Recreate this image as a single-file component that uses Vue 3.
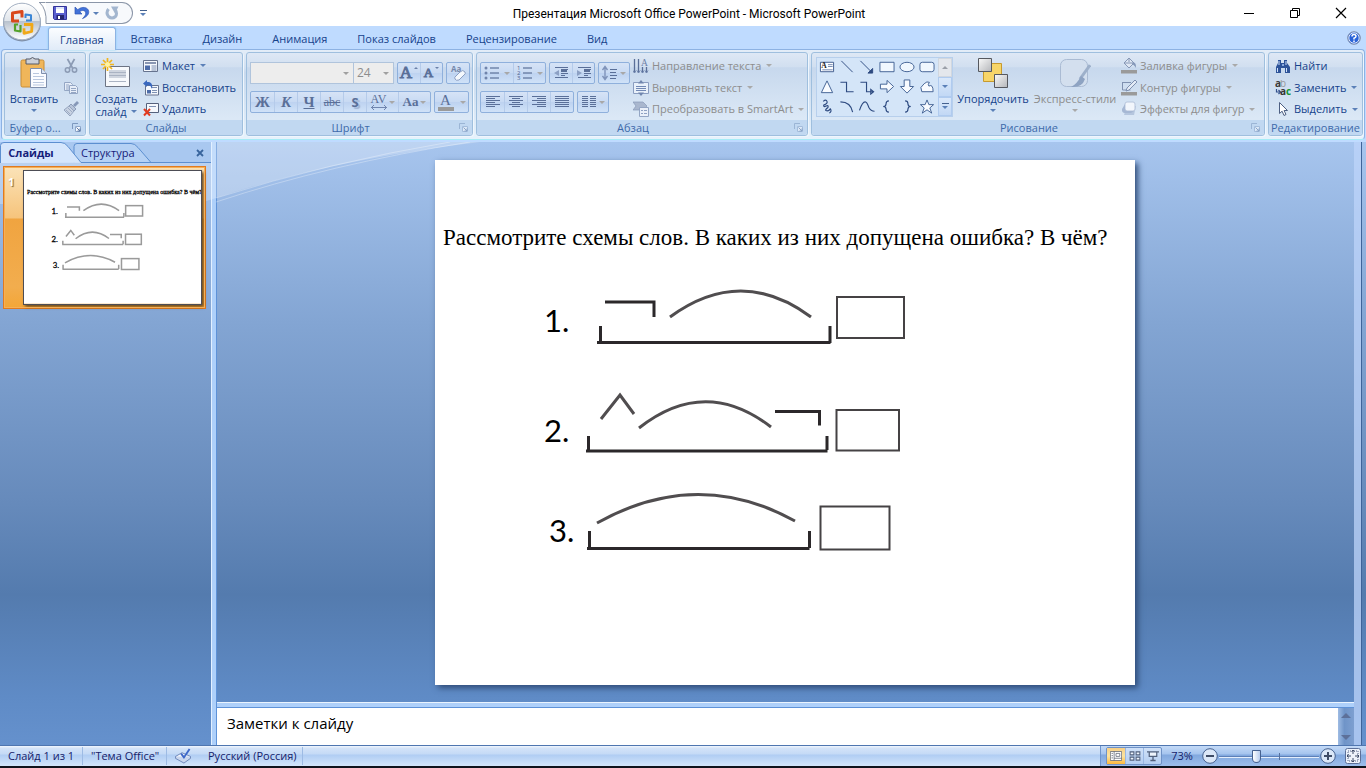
<script setup>
import { ref } from 'vue'

const tabs = ['Главная', 'Вставка', 'Дизайн', 'Анимация', 'Показ слайдов', 'Рецензирование', 'Вид']
const zoom = ref(36)
const dark = '#5a6f98'

const lines = (rows) => rows.map(([x1, x2, y]) => `<path d="M${x1} ${y}.5H${x2}" stroke="${dark}" stroke-width="1"/>`).join('')
const six = [2, 4, 6, 8, 10, 12]

const ic = {
  save: '<path d="M1.5 1.5h13v13h-12l-1-1z" fill="#5a5fd0" stroke="#34349a"/><path d="M4 2h8v6H4z" fill="#fff"/><path d="M4 2h8v2H4z" fill="#dfe6fa"/><path d="M4.500 10h7.500v4.500h-7.500z" fill="#25256e"/><path d="M6 11h2v3H6z" fill="#fff"/>',
  undo: '<path d="M1 2v7h7L5.800 6.800C8 4.600 11.500 5.200 11.800 8c.1 2-1.400 3.700-3.300 5.600C12.500 12 15 9.500 14.700 6.500 14.300 2.200 8 .8 3.800 4.700z" fill="#4272d8" stroke="#2c55b4" stroke-width=".7"/>',
  redo: '<path d="M4.500 4Q1.500 8 4.500 11.500Q8 14.500 11.500 11.500Q13.500 8.500 11.500 5" fill="none" stroke="#a3b6cf" stroke-width="3"/><path d="M7 1.500h7.500L11 8.500z" fill="#a3b6cf"/>',
  cut: '<path d="M4.500 1l5 9M11.500 1l-5 9" stroke="#8c9bb4" stroke-width="1.700"/><circle cx="4.500" cy="12" r="2.200" fill="none" stroke="#8c9bb4" stroke-width="1.500"/><circle cx="11.500" cy="12" r="2.200" fill="none" stroke="#8c9bb4" stroke-width="1.500"/>',
  copy: '<path d="M1.500 2.500h6l2 2v6h-8z" fill="#e6edf8" stroke="#94a6c4"/><path d="M3 5h3M3 7h3M3 9h3" stroke="#94a6c4"/><path d="M6.500 5.500h6l2 2v6h-8z" fill="#e6edf8" stroke="#94a6c4"/><path d="M8 8.500h5M8 10.500h5M8 12.500h5" stroke="#94a6c4"/>',
  brush: '<path d="M15 1l-4 4" stroke="#8698b8" stroke-width="2.800"/><path d="M8 3l5 5-2 2-5-5z" fill="#b6c3d8" stroke="#8c9cb8"/><path d="M6 5l5 5-4 5-6-6z" fill="#c8d2e2" stroke="#94a4be"/><path d="M3 9l4 4M5 7l4 4" stroke="#92a2bd" stroke-width=".8"/>',
  layout: '<path d="M.5 2.500h14v11H.5z" fill="#f5f8fd" stroke="#66738e"/><path d="M2 4h11v2H2z" fill="#8996b2"/><path d="M2 7.500h5v4.500H2z" fill="#4d6ca8"/><path d="M8.500 8h5M8.500 10h5M8.500 12h5" stroke="#7e91b4"/>',
  reset: '<path d="M2.500 5.500h13v9.500h-13z" fill="#f5f8fd" stroke="#66738e"/><path d="M8 7.500h6M9 10.500h5M9 12.500h5" stroke="#7e91b4"/><path d="M4 10h4v3.500H4z" fill="#4d6ca8"/><path d="M0 3.500L4 0v2c4-.4 6 2 5 7-.6-2.600-2-4-5-3.700V7z" fill="#3a68be"/>',
  del: '<path d="M3.500 2.500h12v9h-12z" fill="#f5f8fd" stroke="#55617c"/><path d="M6 5.500h7" stroke="#7e91b4"/><path d="M1 8l6 6.500M7 8l-6 6.500" stroke="#e23a1e" stroke-width="2"/>',
  bullets: [3, 8, 13].map(y => `<circle cx="2" cy="${y}" r="1.500" fill="#7084ab"/><path d="M6 ${y}h9" stroke="${dark}" stroke-width="1.200"/>`).join(''),
  numbers: [3, 8, 13].map((y, i) => `<text x="0" y="${y + 2}" font-size="6" fill="#50658f" font-family="Open Sans">${i + 1}</text><path d="M6 ${y}h9" stroke="${dark}" stroke-width="1.200"/>`).join(''),
  outdent: lines([[2, 15, 1], [8, 15, 3], [8, 12, 5], [8, 15, 7], [8, 12, 9], [2, 15, 11]]) + '<path d="M8 3h6v3H8z" fill="#5a6f98"/><path d="M6 4v6L1 7z" fill="#8ca0c4"/>',
  indent: lines([[2, 15, 1], [8, 15, 3], [8, 12, 5], [8, 15, 7], [8, 12, 9], [2, 15, 11]]) + '<path d="M8 3h6v3H8z" fill="#5a6f98"/><path d="M1 4v6l5-3z" fill="#8ca0c4"/>',
  spacing: '<path d="M3 2v12M0.500 5L3 1.500 5.500 5M.500 11L3 14.500 5.500 11" fill="none" stroke="#7f93ba" stroke-width="1.400"/><path d="M8 4.500h7M8 7.500h6M8 10.500h7M8 13.500h6" stroke="#5a6f98"/>',
  left: lines(six.map((y, i) => [1, i % 2 ? 10 : 15, y])),
  center: lines(six.map((y, i) => i % 2 ? [4, 12, y] : [1, 15, y])),
  right: lines(six.map((y, i) => [i % 2 ? 6 : 1, 15, y])),
  justify: lines(six.map(y => [1, 15, y])),
  columns: lines(six.flatMap(y => [[1, 7, y], [9, 15, y]])),
  dir: '<path d="M1.500 1v14M5.500 1v14M9.500 9v6M13.500 9v6" stroke="#5a6f98" stroke-width="1.300"/><path d="M0 12.500l1.500 2.500L3 12.500M4 12.500L5.500 15 7 12.500M8 12.500L9.500 15l1.500-2.500M12 12.500l1.500 2.500 1.500-2.500" fill="none" stroke="#7287b0"/><text x="8" y="8" font-size="9.500" fill="#6c7fa6" font-family="Liberation Serif">A</text>',
  valign: '<path d="M.5 2.500h15v11H.5z" fill="#e8f0fa" stroke="#8a9dc0"/><path d="M3 6.500h10M3 8.500h10M3 10.500h10" stroke="#7188b4"/><path d="M8 0l3 3.500H5zM8 16l3-3.500H5z" fill="#7086ae"/>',
  smart: '<path d="M0 1h10l4 4-4 4H0l3-4z" fill="#a9b7ce" stroke="#8799b7" stroke-width=".7"/><path d="M6.500 6.500h9v9h-9z" fill="#eaf0f9" stroke="#94a6c4"/><path d="M8 9.500h2M11 9.500h3M8 12.500h2M11 12.500h3" stroke="#8fa2c3"/>',
  fill: '<path d="M8 0l5 5-5 5-5-5z" fill="#dfe7f3" stroke="#8798b6"/><path d="M8 0v4M3 5h10" stroke="#8798b6"/><path d="M12 4c3 1 3 3 3 6-1-2-2-3-4-4z" fill="#8497b8"/><path d="M0 12h16v3.500H0z" fill="#9a9a9a"/>',
  outline: '<path d="M1 2.500h9M1.500 2v8h8" fill="none" stroke="#7e90b0"/><path d="M14 0l2 2-8 8-3 1 1-3z" fill="#e4ebf6" stroke="#7e90b0"/><path d="M0 12h16v3.500H0z" fill="#9a9a9a"/>',
  effects: '<path d="M6 5h9l-2 9H3z" fill="#9db0cf" opacity=".6"/><rect x="4" y="1" width="10" height="9" rx="2" fill="#f2f6fc" stroke="#b7c5dc"/><path d="M4 3L1 8q-.5 4 3 4h6l3-2H6q-2 0-2-2z" fill="#a6b8d4"/>',
  find: '<path d="M3 2h3v3h1V2h0v3h2V2h3v3l3 4v6h-5v-5H6v5H1V9l2-4z" fill="#2d5399"/><path d="M2.500 10v4M11.500 10v4M4 3v4M11 3v4" stroke="#cfe0fa"/><path d="M7 6h2v2H7z" fill="#89a9de"/>',
  replace: '<text x="0" y="7" font-size="10" font-weight="700" fill="#3a3a3a" font-family="Open Sans">a</text><text x="5" y="7" font-size="10" fill="#999" font-family="Open Sans">b</text><path d="M1.500 9v3h3M3.500 10l2 2-2 2" fill="none" stroke="#33508c" stroke-width="1.200"/><text x="5" y="15" font-size="10" font-weight="700" fill="#333" font-family="Open Sans">a</text><text x="11" y="15" font-size="10" font-weight="700" fill="#149434" font-family="Open Sans">c</text>',
  pointer: '<path d="M4.500 1.500v11l2.600-2.300 1.900 4.300 2-1-1.900-4h3.400z" fill="#fff" stroke="#4d5f82"/>',
  launch: '<path d="M.5 6V.5H6" fill="none" stroke="#7d99bf"/><path d="M3.500 3.500h5v5h-5z" fill="#f4f8fd" stroke="#8ca6ca"/><path d="M4.500 4.500L8 8M8 5.500V8H5.500" fill="none" stroke="#5f7ca8"/>',
  spell: '<path d="M0 9l7-4 9 4-7 5z" fill="#f4f7fd" stroke="#6b84b8"/><path d="M0 9v2l9 5 7-5V9" fill="#c9d6ee" stroke="#6b84b8"/><path d="M6 6l3 4 6-9" fill="none" stroke="#3d67c8" stroke-width="2"/>',
  vNormal: '<path d="M.5 1.500h15v12H.5z" fill="#fff" stroke="#5b6170"/><path d="M5.500 1.500v12M5.500 10.500h10" stroke="#5b6170"/><path d="M8 4h5v4H8z" fill="none" stroke="#5b6170"/><path d="M2 4h2M2 7h2M2 10h2" stroke="#5b6170"/>',
  vGrid: '<path d="M1.500 2.500h5v4h-5zM9.500 2.500h5v4h-5zM1.500 9.500h5v4h-5zM9.500 9.500h5v4h-5z" fill="#eef4fc" stroke="#51607c" stroke-width="1.400"/>',
  vShow: '<path d="M0 2.500h16M3 3v5.500h10V3" fill="#eef4fc" stroke="#51607c" stroke-width="1.600"/><path d="M8 9v4M4.500 14h7" stroke="#51607c" stroke-width="1.800"/>'
}

const shapes = [
  '<path d="M1 3.500h14v10H1z" fill="#fff" stroke="#3d5a8c"/><text x="2" y="10" font-size="8" font-weight="700" fill="#222" font-family="Liberation Serif">A</text><path d="M9 6h5M9 8h5M3 11.500h11" stroke="#6f86b0"/>',
  '<path d="M2 2l12 12" stroke="#2d4a80"/>',
  '<path d="M1 2l12 12M14 10v5H9z" stroke="#2d4a80" fill="#2d4a80"/>',
  '<path d="M.5 3.500h15v10H.5z" fill="#f0f7fe" stroke="#3f5f92"/>',
  '<ellipse cx="8" cy="8.500" rx="7.500" ry="5" fill="#f0f7fe" stroke="#3f5f92"/>',
  '<rect x=".5" y="3.500" width="15" height="10" rx="2.500" fill="#f0f7fe" stroke="#3f5f92"/>',
  '<path d="M8 2l6 12.500H2z" fill="#f8fbff" stroke="#3f5f92"/>',
  '<path d="M1 3.500h6.500v10H15" fill="none" stroke="#2d4a80" stroke-width="1.200"/>',
  '<path d="M1 3.500h6.500v10H14M12 11l3 2.500-3 2.500z" fill="none" stroke="#2d4a80" stroke-width="1.200"/>',
  '<path d="M1 5.500h7v-4l7 6.500-7 6.500v-4H1z" fill="#f8fbff" stroke="#3f5f92"/>',
  '<path d="M5 1h6v7h4l-7 7-7-7h4z" fill="#f8fbff" stroke="#3f5f92"/>',
  '<path d="M5 5Q8 2 10.500 3.500 8.500 6 10 7.500 14.500 5 14.500 13.500H2.500L1.500 9z" fill="#f8fbff" stroke="#3f5f92"/>',
  '<path d="M4 2.500Q7 0 8 2.500T4.500 6.500Q4 9 7 7.500T9 9Q5 12 7.500 12.500T11.500 10.500Q13.500 13 10.500 15" fill="none" stroke="#2d4a80" stroke-width="1.200"/>',
  '<path d="M1 3q11 0 13 11" fill="none" stroke="#2d4a80" stroke-width="1.200"/>',
  '<path d="M0 12q3-9 6-9 2 0 4 6 2 4 6 4" fill="none" stroke="#2d4a80" stroke-width="1.200"/>',
  '<path d="M10 2q-3 0-3 3 0 3-3 3 3 0 3 3 0 3 3 3" fill="none" stroke="#2d4a80" stroke-width="1.200"/>',
  '<path d="M6 2q3 0 3 3 0 3 3 3-3 0-3 3 0 3-3 3" fill="none" stroke="#2d4a80" stroke-width="1.200"/>',
  '<path d="M8 1l2 5h5l-4 3.500 2 5.500-5-3.500L3 15l2-5.500L1 6h5z" fill="#f8fbff" stroke="#3f5f92"/>'
]

const slideRows = [['1.', 109, 172], ['2.', 109, 282], ['3.', 114, 382]]
const slideLines = [
  'M170 142h49v15M165.500 166v16M162 182.500h233.500M395 183v-17',
  'M340 251.500h44.500v14M153.500 276v15M151 291h241.500M392 290v-14',
  'M154.500 371v17M152 388.500h222.500M374.500 388v-17'
]
const slideCurves = [
  'M235 157Q306 105 376 157',
  'M166 259l19-24 14 19M204 268Q270 216 336 267',
  'M162 363Q262 307 360 361'
]
const slideBoxes = [[402, 137, 67, 41], [401.5, 250, 62.5, 40.5], [385.500, 346.500, 69, 43]]
</script>

<template>
  <div class="app">
    <header class="titlebar">
      <div class="qat">
        <svg class="qat-edge" viewBox="0 0 14 22" aria-hidden="true"><path d="M0 .5h6.500M.5 .5Q8 7 7 21.500H14" fill="none" stroke="#8b96a8" /></svg>
        <button aria-label="Сохранить"><svg class="i16" viewBox="0 0 16 16" v-html="ic.save" /></button>
        <button class="undo" aria-label="Отменить"><svg class="i16" viewBox="0 0 16 16" v-html="ic.undo" /></button>
        <button class="mini" aria-label="Список отмен"><i class="arrow" /></button>
        <button aria-label="Вернуть"><svg class="i16" viewBox="0 0 16 16" v-html="ic.redo" /></button>
      </div>
      <button class="qat-more" aria-label="Настройка панели"><i class="bar" /><i class="arrow" /></button>
      <h1>Презентация Microsoft Office PowerPoint - Microsoft PowerPoint</h1>
      <div class="winbtns">
        <button aria-label="Свернуть"><svg viewBox="0 0 12 12"><path d="M1 6.500h10" stroke="#000" /></svg></button>
        <button aria-label="Восстановить окно"><svg viewBox="0 0 12 12"><path d="M1.500 3.500h7v7h-7zM3.500 3.500v-2h7v7h-2" fill="none" stroke="#000" /></svg></button>
        <button aria-label="Закрыть"><svg viewBox="0 0 12 12"><path d="M1 1l10 10M11 1L1 11" stroke="#000" stroke-width="1.200" /></svg></button>
      </div>
    </header>

    <button class="orb" aria-label="Кнопка Office">
      <svg viewBox="0 0 40 40">
        <defs>
          <linearGradient id="orbg" x1="0" y1="0" x2="0" y2="1"><stop offset="0" stop-color="#fff" /><stop offset=".48" stop-color="#dfe4ea" /><stop offset=".5" stop-color="#b9c2ce" /><stop offset="1" stop-color="#fff" /></linearGradient>
        </defs>
        <circle cx="20" cy="20.500" r="19" fill="#7e8fa9" />
        <circle cx="20" cy="19.500" r="18.300" fill="url(#orbg)" stroke="#a7b3c4" />
        <g fill="none" stroke-linejoin="round">
          <path d="M17 19H10.500V11l9.500-1.500v6" stroke="#d9481c" stroke-width="3" />
          <path d="M23.500 16v-3.500l5.500.8V18.500h-5" stroke="#3b86d6" stroke-width="2" />
          <path d="M18.500 23v6.500l-5.500-1V22.500h3" stroke="#55a22a" stroke-width="2.200" />
          <path d="M22 22.500h8l-.3 7-7.700 1.800v-5" stroke="#f0a818" stroke-width="2.800" />
        </g>
      </svg>
    </button>

    <nav class="tabs">
      <button v-for="(t, i) in tabs" :key="t" :class="{ on: i === 0 }">{{ t }}</button>
      <button class="help" aria-label="Справка">
        <svg viewBox="0 0 14 14"><circle cx="7" cy="7" r="6.300" fill="#2a63d8" stroke="#8a94a8" /><circle cx="7" cy="7" r="5.200" fill="none" stroke="#dfe9fb" /><path d="M5 5.500Q5 3.500 7 3.500T9 5.300Q9 6.500 7 7.300V8.500M7 9.500v1.500" fill="none" stroke="#fff" stroke-width="1.500" /></svg>
      </button>
    </nav>

    <section class="ribbon">
      <div class="group g-clip">
        <div class="body">
          <button class="big">
            <svg class="i32" viewBox="0 0 32 32">
              <rect x="3" y="3" width="23" height="27" rx="1.500" fill="#f0b65a" stroke="#c98d35" /><path d="M8 2h4q2.500-3 5 0h4v5H8z" fill="#ccd0d8" stroke="#565b66" />
              <path d="M12.500 11.500h11l5 5v14h-16z" fill="#fbfcff" stroke="#7f8fad" /><path d="M23.500 11.500v5h5" fill="#dbe5f5" stroke="#7f8fad" /><path d="M15 19.500h11M15 22.500h11M15 25.500h11M15 28h11M15 16.500h6" stroke="#b9c7de" />
            </svg>
            <span>Вставить</span><i class="arrow" />
          </button>
          <div class="rows icons">
            <button class="off" aria-label="Вырезать"><svg class="i16" viewBox="0 0 16 16" v-html="ic.cut" /></button>
            <button class="off" aria-label="Копировать"><svg class="i16" viewBox="0 0 16 16" v-html="ic.copy" /></button>
            <button class="off" aria-label="Формат по образцу"><svg class="i16" viewBox="0 0 16 16" v-html="ic.brush" /></button>
          </div>
        </div>
        <div class="label">Буфер о...<svg class="launch" viewBox="0 0 9 9" v-html="ic.launch" /></div>
      </div>

      <div class="group g-slides">
        <div class="body">
          <button class="big">
            <svg class="i32" viewBox="0 0 32 32">
              <path d="M5.500 9.500h24v20h-24z" fill="#f7f9fc" stroke="#6d7484" /><path d="M9 13h17v8H9z" fill="#cfd5df" /><path d="M9 15.500h17M9 18.500h17M9 24.500h17" stroke="#aab3c3" />
              <path d="M7.500 1v13M1 7.500h13M3 3l9 9M12 3l-9 9" stroke="#f2b51c" stroke-width="1.700" /><circle cx="7.500" cy="7.500" r="2.500" fill="#fff3a0" />
            </svg>
            <span>Создать</span><span class="inl">слайд <i class="arrow" /></span>
          </button>
          <div class="rows">
            <button><svg class="i16" viewBox="0 0 16 16" v-html="ic.layout" />Макет<i class="arrow" /></button>
            <button><svg class="i16" viewBox="0 0 16 16" v-html="ic.reset" />Восстановить</button>
            <button><svg class="i16" viewBox="0 0 16 16" v-html="ic.del" />Удалить</button>
          </div>
        </div>
        <div class="label">Слайды</div>
      </div>

      <div class="group g-font">
        <div class="body stack">
          <div class="line">
            <div class="combo wide"><select disabled aria-label="Шрифт"><option></option></select><i class="arrow" /></div>
            <div class="combo size"><select disabled aria-label="Размер шрифта"><option>24</option></select><i class="arrow" /></div>
            <div class="set gap">
              <button class="serif" aria-label="Увеличить размер"><b class="s18">A</b><i class="arrow up" /></button>
              <button class="serif" aria-label="Уменьшить размер"><b class="s14">A</b><i class="arrow sup" /></button>
            </div>
            <div class="set">
              <button aria-label="Очистить формат"><svg class="i16" viewBox="0 0 16 16"><text x="1" y="7" font-size="8" font-weight="700" fill="#7587aa" font-family="Open Sans">Aa</text><path d="M10 7q3-3 5 0 1 2-1 3l-5 5q-3 1-4-1-1-2 1-3z" fill="#f4f8fd" stroke="#8c9fc2" /></svg></button>
            </div>
          </div>
          <div class="line">
            <div class="set chars">
              <button class="serif"><b>Ж</b></button>
              <button class="serif"><b><em>К</em></b></button>
              <button class="serif"><b><u>Ч</u></b></button>
              <button class="serif"><s>abc</s></button>
              <button class="shadow"><b>S</b></button>
              <button class="serif w30"><span class="av">AV<svg viewBox="0 0 16 5"><path d="M0 2.500h16M3 0L.5 2.500 3 5M13 0l2.500 2.500L13 5" fill="none" stroke="#7085ae" /></svg></span><i class="arrow" /></button>
              <button class="serif w30"><b class="aa">Aa</b><i class="arrow" /></button>
            </div>
            <div class="set">
              <button class="serif w35"><span class="fc">A</span><i class="arrow" /></button>
            </div>
          </div>
        </div>
        <div class="label">Шрифт<svg class="launch dim" viewBox="0 0 9 9" v-html="ic.launch" /></div>
      </div>

      <div class="group g-par">
        <div class="body">
          <div class="stack par">
            <div class="line">
              <div class="set">
                <button class="w32" aria-label="Маркеры"><svg class="i16" viewBox="0 0 16 16" v-html="ic.bullets" /><i class="arrow" /></button>
                <button class="w32" aria-label="Нумерация"><svg class="i16" viewBox="0 0 16 16" v-html="ic.numbers" /><i class="arrow" /></button>
              </div>
              <div class="set">
                <button aria-label="Уменьшить отступ"><svg class="i16" viewBox="0 0 16 14" v-html="ic.outdent" /></button>
                <button aria-label="Увеличить отступ"><svg class="i16" viewBox="0 0 16 14" v-html="ic.indent" /></button>
              </div>
              <div class="set"><button class="w30" aria-label="Интервал"><svg class="i16" viewBox="0 0 16 16" v-html="ic.spacing" /><i class="arrow" /></button></div>
            </div>
            <div class="line">
              <div class="set al">
                <button aria-label="По левому краю"><svg class="i16" viewBox="0 0 16 16" v-html="ic.left" /></button>
                <button aria-label="По центру"><svg class="i16" viewBox="0 0 16 16" v-html="ic.center" /></button>
                <button aria-label="По правому краю"><svg class="i16" viewBox="0 0 16 16" v-html="ic.right" /></button>
                <button aria-label="По ширине"><svg class="i16" viewBox="0 0 16 16" v-html="ic.justify" /></button>
              </div>
              <div class="set"><button class="w30" aria-label="Колонки"><svg class="i16" viewBox="0 0 16 16" v-html="ic.columns" /><i class="arrow" /></button></div>
            </div>
          </div>
          <div class="rows">
            <button class="off"><svg class="i16" viewBox="0 0 16 16" v-html="ic.dir" />Направление текста<i class="arrow" /></button>
            <button class="off"><svg class="i16" viewBox="0 0 16 16" v-html="ic.valign" />Выровнять текст<i class="arrow" /></button>
            <button class="off"><svg class="i16" viewBox="0 0 16 16" v-html="ic.smart" />Преобразовать в SmartArt<i class="arrow" /></button>
          </div>
        </div>
        <div class="label">Абзац<svg class="launch dim" viewBox="0 0 9 9" v-html="ic.launch" /></div>
      </div>

      <div class="group g-draw">
        <div class="body">
          <div class="gallery">
            <div class="cells"><button v-for="(s, i) in shapes" :key="i" :aria-label="'Фигура ' + (i + 1)"><svg class="i16" viewBox="0 0 16 17" v-html="s" /></button></div>
            <div class="scroll">
              <button class="dis" aria-label="Вверх"><i class="arrow flip" /></button>
              <button aria-label="Вниз"><i class="arrow" /></button>
              <button aria-label="Все фигуры"><i class="bar" /><i class="arrow" /></button>
            </div>
          </div>
          <button class="big arrange">
            <svg class="i32" viewBox="0 0 32 32">
              <defs><linearGradient id="gr" x1="0" y1="0" x2="1" y2="1"><stop offset="0" stop-color="#fafafa" /><stop offset="1" stop-color="#b4b6ba" /></linearGradient></defs>
              <path d="M6.500 6.500h18v18h-18z" fill="#f7d568" stroke="#c79a2e" /><path d="M1.500 1.500h13v13h-13z" fill="url(#gr)" stroke="#55585f" /><path d="M17.500 17.500h13v13h-13z" fill="url(#gr)" stroke="#55585f" />
            </svg>
            <span>Упорядочить</span><i class="arrow" />
          </button>
          <button class="big off styles">
            <svg class="i32" viewBox="0 0 32 32">
              <rect x="1.500" y="2.500" width="27" height="27" rx="6" fill="#d3dfee" stroke="#aabbd3" /><path d="M31 8L21 22" stroke="#9db0ca" stroke-width="3" /><path d="M22 19l4 3q-3 9-14 8 6-3 10-11z" fill="#8ea3c2" />
            </svg>
            <span>Экспресс-стили</span><i class="arrow" />
          </button>
          <div class="rows">
            <button class="off"><svg class="i16" viewBox="0 0 16 16" v-html="ic.fill" />Заливка фигуры<i class="arrow" /></button>
            <button class="off"><svg class="i16" viewBox="0 0 16 16" v-html="ic.outline" />Контур фигуры<i class="arrow" /></button>
            <button class="off"><svg class="i16" viewBox="0 0 16 16" v-html="ic.effects" />Эффекты для фигур<i class="arrow" /></button>
          </div>
        </div>
        <div class="label">Рисование<svg class="launch dim" viewBox="0 0 9 9" v-html="ic.launch" /></div>
      </div>

      <div class="group g-edit">
        <div class="body">
          <div class="rows">
            <button><svg class="i16" viewBox="0 0 16 16" v-html="ic.find" />Найти</button>
            <button><svg class="i16" viewBox="0 0 16 16" v-html="ic.replace" />Заменить<i class="arrow" /></button>
            <button><svg class="i16" viewBox="0 0 16 16" v-html="ic.pointer" />Выделить<i class="arrow" /></button>
          </div>
        </div>
        <div class="label">Редактирование</div>
      </div>
    </section>

    <main class="work">
      <svg class="swoosh" viewBox="0 0 480 62" aria-hidden="true">
        <path d="M0 0H480Q330 18 216 56Q100 92 0 130z" fill="#fff" opacity=".26" />
        <path d="M470 0Q330 22 216 60M450 0Q330 20 216 56" fill="none" stroke="#fff" opacity=".3" />
      </svg>
      <aside class="side">
        <div class="side-tabs">
          <svg class="side-shape" viewBox="0 0 211 21" aria-hidden="true">
            <path d="M74 20.500V4.500Q74 1.500 77 1.500H131Q135 1.500 138 5.500L151 20.500" fill="#b5d1f4" stroke="#5c8fd0" />
            <path d="M.5 21V3.500Q.5 .500 4 .5H61Q65 .5 68 4.500L81 20.500H211" fill="#d5e6fc" stroke="#5c8fd0" />
          </svg>
          <button class="on">Слайды</button>
          <button>Структура</button>
          <button class="x" aria-label="Закрыть панель"><svg viewBox="0 0 8 8"><path d="M1 1l6 6M7 1L1 7" stroke="#38649c" stroke-width="1.800" /></svg></button>
        </div>
        <div class="thumb">
          <b>1</b>
          <svg class="mini-slide" viewBox="0 0 700 525">
            <rect width="700" height="525" fill="#fff" />
            <text class="t-title" x="12" y="89">Рассмотрите схемы слов. В каких из них допущена ошибка? В чём?</text>
            <text v-for="r in slideRows" :key="r[0]" class="t-num" :x="r[1]" :y="r[2]">{{ r[0] }}</text>
            <path v-for="d in slideLines" :key="d" :d="d" class="ln" />
            <path v-for="d in slideCurves" :key="d" :d="d" class="cv" />
            <rect v-for="b in slideBoxes" :key="b[0]" :x="b[0]" :y="b[1]" :width="b[2]" :height="b[3]" class="bx" />
          </svg>
        </div>
      </aside>
      <div class="split" />
      <div class="right">
        <div class="stage">
          <svg class="slide" viewBox="0 0 700 525">
            <text class="t-title" x="8" y="85">Рассмотрите схемы слов. В каких из них допущена ошибка? В чём?</text>
            <text v-for="r in slideRows" :key="r[0]" class="t-num" :x="r[1]" :y="r[2]">{{ r[0] }}</text>
            <path v-for="d in slideLines" :key="d" :d="d" class="ln" />
            <path v-for="d in slideCurves" :key="d" :d="d" class="cv" />
            <rect v-for="b in slideBoxes" :key="b[0]" :x="b[0]" :y="b[1]" :width="b[2]" :height="b[3]" class="bx" />
          </svg>
        </div>
        <div class="notes">
          <textarea aria-label="Заметки к слайду">Заметки к слайду</textarea>
          <div class="nscroll"><i class="tri up" /><i class="tri" /></div>
        </div>
      </div>
      <div class="edge" />
    </main>

    <footer class="status">
      <span class="cell c1">Слайд 1 из 1</span>
      <span class="cell c2">"Тема Office"</span>
      <span class="cell c3"><svg class="i16" viewBox="0 0 16 17" v-html="ic.spell" />Русский (Россия)</span>
      <div class="zoomer">
        <div class="views">
          <button class="on" aria-label="Обычный"><svg viewBox="0 0 16 15" v-html="ic.vNormal" /></button>
          <button aria-label="Сортировщик"><svg viewBox="0 0 16 16" v-html="ic.vGrid" /></button>
          <button aria-label="Показ"><svg viewBox="0 0 16 16" v-html="ic.vShow" /></button>
        </div>
        <span class="pct">73%</span>
        <button class="rnd" aria-label="Уменьшить"><svg viewBox="0 0 16 16"><circle cx="8" cy="8" r="7.300" fill="#dbe7f8" stroke="#46618f" /><path d="M4 8h8" stroke="#3f4c66" stroke-width="2" /></svg></button>
        <input v-model="zoom" class="range" type="range" min="0" max="100" aria-label="Масштаб">
        <button class="rnd" aria-label="Увеличить"><svg viewBox="0 0 16 16"><circle cx="8" cy="8" r="7.300" fill="#dbe7f8" stroke="#46618f" /><path d="M4 8h8M8 4v8" stroke="#3f4c66" stroke-width="2" /></svg></button>
        <button class="rnd fit" aria-label="Вписать слайд"><svg viewBox="0 0 16 16"><rect x=".5" y=".5" width="15" height="15" rx="2" fill="#eef3fb" stroke="#5c7099" /><path d="M3 3h10v10H3z" fill="none" stroke="#59678a" stroke-dasharray="1 1" /><path d="M8 2v4M8 10v4M2 8h4M10 8h4M6.500 3.500L8 2l1.500 1.500M6.500 12.500L8 14l1.500-1.500M3.500 6.500L2 8l1.500 1.500M12.500 6.500L14 8l-1.500 1.500" fill="none" stroke="#3f4c66" /></svg></button>
      </div>
    </footer>
  </div>
</template>

<style>
html, body, #app { height: 100%; }
body { margin: 0; overflow: hidden; }
</style>

<style scoped>
.app { position: relative; display: flex; flex-direction: column; height: 100%; background: #bfdbff; font: 11px/16px "Open Sans", "Noto Sans", sans-serif; color: #15428b; overflow: hidden; }
button { display: flex; align-items: center; justify-content: center; margin: 0; padding: 0; border: 0; background: none; font: inherit; color: inherit; white-space: nowrap; }
svg { display: block; flex: none; }
.i16 { width: 16px; height: 16px; }
.i32 { width: 32px; height: 32px; }
.arrow { width: 0; height: 0; border: 3px solid transparent; border-top-color: #5b80b8; border-bottom: 0; flex: none; }
.bar { width: 7px; height: 1px; background: #44618f; }

.titlebar { display: flex; align-items: center; height: 26px; background: #fff; }
.qat { position: relative; display: flex; align-items: center; box-sizing: border-box; width: 87px; height: 22px; margin-left: 46px; padding-left: 5px; border: 1px solid #8b96a8; border-left: 0; border-radius: 0 11px 11px 0; background: #f7f9fc; }
.qat-edge { position: absolute; left: -7px; top: -1px; width: 14px; height: 22px; }
.qat button { width: 18px; height: 18px; margin-right: 4px; }
.qat button.undo { margin-right: 0; }
.qat button.mini { width: 10px; margin-right: 2px; }
.qat-more { flex-direction: column; gap: 2px; width: 20px; }
h1 { flex: 1; margin: 0 1px 0 0; padding-top: 2px; font: 400 12px/16px Roboto, "Open Sans", sans-serif; color: #000; text-align: center; }
.winbtns { display: flex; margin-right: 2px; }
.winbtns button { width: 46px; height: 26px; }
.winbtns svg { width: 12px; height: 12px; }
.orb { position: absolute; left: 2px; top: 2px; width: 40px; height: 40px; z-index: 3; }
.orb svg { width: 40px; height: 40px; }

.tabs { display: flex; align-items: stretch; height: 23px; padding-left: 48px; }
.tabs button { padding: 2px 14px 0; border: 1px solid transparent; border-bottom: 0; }
.tabs button.on { position: relative; z-index: 1; padding: 2px 11px 1px; margin: 1px 0 -1px; border-color: #8db2e3; border-radius: 3px 3px 0 0; background: linear-gradient(#fbfdff, #e0ebf8); box-shadow: 0 0 2px #7fd0f0; }
.tabs button.help { margin-left: auto; padding: 0 4px 0 0; }
.help svg { width: 14px; height: 14px; }

.ribbon { display: flex; gap: 3px; box-sizing: border-box; height: 91px; margin: 0 1px; padding: 2px 1px 3px 2px; border: 1px solid #8db2e3; border-bottom-color: #a6ecf6; border-radius: 4px; background: linear-gradient(#e3edf8, #d3e1f2 20%, #c9daee 25%, #e6f2fc); }
.group { display: flex; flex-direction: column; box-sizing: border-box; flex: none; border: 1px solid #9fbfde; border-radius: 3px; background: linear-gradient(#dee8f5, #d1dff0 17%, #c7d8ed 18%, #dbe8f6 80%); box-shadow: 1px 1px 0 #eff6fd; }
.g-clip { width: 82px; }
.g-slides { width: 154px; }
.g-font { width: 227px; }
.g-par { width: 332px; }
.g-draw { flex: 1; min-width: 0; }
.g-edit { width: 95px; }
.body { display: flex; flex: 1; min-height: 0; }
.label { position: relative; height: 15px; line-height: 16px; background: #c1d8f1; color: #3e6aaa; text-align: center; white-space: nowrap; border-radius: 0 0 3px 3px; }
.g-clip .label { padding-right: 20px; }
.g-font .label, .g-par .label, .g-draw .label { padding-right: 18px; }
.launch { position: absolute; right: 4px; top: 3px; width: 9px; height: 9px; }
.launch.dim { opacity: .55; }
.big { flex-direction: column; justify-content: flex-start; padding-top: 4px; line-height: 13px; }
.big .i32 { margin-bottom: 3px; }
.big > .arrow { margin-top: 4px; }
.inl { display: flex; align-items: center; gap: 4px; }
.g-clip .big { width: 56px; margin-left: 1px; }
.g-slides .big { width: 50px; margin-left: 1px; }
.rows { display: flex; flex-direction: column; padding: 2px 0 0 2px; }
.rows button { justify-content: flex-start; height: 22px; gap: 3px; }
.rows .arrow { margin-left: 2px; }
.rows.icons { padding-left: 1px; }
.off { color: #8d8d8d; }
.off .arrow { border-top-color: #a9a9a9; }

.stack { display: flex; flex-direction: column; gap: 7px; padding: 9px 0 0 3px; }
.line { display: flex; gap: 3px; height: 22px; }
.combo { display: flex; align-items: center; box-sizing: border-box; position: relative; height: 22px; border: 1px solid #b0c4dc; background: #ededed; }
.combo + .combo { margin-left: -4px; }
.combo.wide { width: 104px; }
.combo.size { width: 41px; }
.combo select { appearance: none; width: 100%; height: 20px; border: 0; padding: 0 3px; background: none; font: inherit; font-size: 12px; color: #8d8d8d; opacity: 1; }
.combo .arrow { position: absolute; right: 4px; border-top-color: #a0a0a0; }
.set { display: flex; box-sizing: border-box; height: 22px; border: 1px solid #8fb0dc; border-radius: 2px; background: linear-gradient(#d6e3f6, #c8daf3 48%, #bdd2f0 50%, #d0e2f8); color: #5a6f98; }
.set button { position: relative; width: 22px; gap: 2px; border-left: 1px solid #b5cbea; }
.set button:first-child { border-left: 0; }
.set .arrow { border-top-color: #a8a8a8; }
.chars button { width: 23px; }
.set .w30 { width: 30px; }
.chars .w30 { width: 32px; }
.set .w32 { width: 32px; gap: 4px; }
.set .w35 { width: 33px; gap: 6px; }
.al button { width: 23px; }
.serif { font-family: "Liberation Serif", serif; font-size: 14px; }
.serif b { font-size: 15px; }
.serif .s18 { font-size: 17px; font-weight: 400; -webkit-text-stroke: 1px #5a6f98; }
.serif .s14 { font-size: 13px; font-weight: 400; -webkit-text-stroke: 1px #5a6f98; }
.set .up { border: 2px solid transparent; border-top: 0; border-bottom-color: #6b80a8; margin-bottom: 10px; }
.set .sup { border: 2px solid transparent; border-bottom: 0; border-top-color: #6b80a8; margin-bottom: 10px; }
.serif s { font-size: 12px; }
.shadow b { font-size: 13px; text-shadow: 2px 2px 1px #9fb2d2; }
.av { display: flex; flex-direction: column; align-items: center; font-size: 12px; line-height: 9px; }
.av svg { width: 16px; height: 5px; margin-top: 1px; }
.serif .aa { font-size: 13px; }
.fc { width: 16px; border-bottom: 4px solid #9a9a9a; line-height: 13px; font-size: 15px; text-align: center; }
.par { width: 151px; }

.gallery { display: flex; box-sizing: border-box; width: 137px; height: 60px; margin: 4px 0 0 4px; border: 1px solid #b7cfec; background: #d4e5f8; }
.cells { display: grid; grid-template-columns: repeat(6, 20px); grid-auto-rows: 20px; align-content: center; flex: 1; }
.cells button { min-height: 0; }
.scroll { display: flex; flex-direction: column; width: 14px; }
.scroll button { flex: 1; flex-direction: column; gap: 2px; border: 1px solid #b0cbef; background: linear-gradient(#dae8fa, #c2d8f5); }
.scroll .dis { background: #e4e7ec; border-color: #d0d7e0; }
.scroll .flip { border-top: 0; border-bottom: 3px solid #9a9fa8; }
.arrange { width: 80px; }
.styles { width: 84px; }
.g-draw .rows { padding-left: 4px; }
.g-edit .rows { padding-left: 6px; }

.work { position: relative; display: flex; flex: 1; min-height: 0; margin-top: 2px; background: linear-gradient(#a7c5ee, #83a5d3 30%, #668abb 60%, #547bae 75%, #5f8bc6 92%, #6591cd); overflow: hidden; }
.swoosh { position: absolute; left: 0; top: 0; width: 480px; height: 62px; }
.side { position: relative; width: 211px; flex: none; border-right: 1px solid #e3f0ff; }
.side-tabs { position: relative; display: flex; align-items: center; height: 21px; color: #15217a; background: #a9c8f0; font-size: 12px; }
.side-shape { position: absolute; left: 0; top: 0; width: 211px; height: 21px; }
.side-tabs button { position: relative; margin-left: 8px; font-size: 11px; }
.side-tabs .on { width: 46px; font-weight: 700; }
.side-tabs .on + button { margin-left: 27px; }
.side-tabs .x { margin: 0 7px 0 auto; }
.x svg { width: 8px; height: 8px; }
.thumb { display: flex; align-items: flex-start; box-sizing: border-box; margin: 3px 5px 0 3px; padding: 3px 3px 3px 4px; border: 1px solid #e07a20; outline: 1px solid #f6b055; outline-offset: -2px; background: linear-gradient(#fbe3b8, #f6c47c 36%, #f0a440 37%, #f2ad4e 85%, #f3a637); }
.thumb b { width: 15px; margin-top: 4px; color: #fff; text-shadow: 1px 1px 1px #7a6030; }
.mini-slide { flex: 1; min-width: 0; border: 1px solid #4d4d55; box-shadow: 2px 2px 3px #6e4b1c; overflow: hidden; }
.split { width: 4px; flex: none; background: #aed0fa; border-right: 1px solid #5e92d8; }
.right { display: flex; flex-direction: column; flex: 1; min-width: 0; position: relative; }
.stage { display: flex; justify-content: center; box-sizing: border-box; flex: 1; min-height: 0; padding: 18px 1px 17px 0; }
.slide { height: 100%; aspect-ratio: 4 / 3; background: #fff; box-shadow: 3px 3px 6px #2f4c78; }
.t-title { font: 23px "Liberation Serif", serif; fill: #000; }
.t-num { font: 31px Lato, "Open Sans", sans-serif; fill: #000; }
.ln { fill: none; stroke: #2b282a; stroke-width: 3px; }
.cv { fill: none; stroke: #504d4f; stroke-width: 3px; }
.bx { fill: none; stroke: #454244; stroke-width: 2px; }
.mini-slide .ln, .mini-slide .cv, .mini-slide .bx { stroke: #9a9a9a; stroke-width: 6px; }
.mini-slide .t-title { font-size: 24px; stroke: #000; stroke-width: 1px; }
.mini-slide .t-num { stroke: #000; stroke-width: 1px; }
.notes { display: flex; height: 37px; border-top: 1px solid #5e92d8; box-shadow: 0 -4px 0 #aed0fa, 0 -5px 0 #eaf4ff; margin-top: 5px; }
textarea { flex: 1; box-sizing: border-box; height: 100%; margin: 0; padding: 5px 10px 0; border: 0; outline: 0; resize: none; background: #fff; color: #000; font: 15px/20px "Open Sans", "Noto Sans", sans-serif; overflow: hidden; }
.nscroll { display: flex; flex-direction: column; align-items: center; justify-content: space-between; width: 16px; padding: 5px 0 5px; box-sizing: border-box; background: linear-gradient(90deg, #9fbce4, #6f94c8 40%, #7d9fd0); }
.tri { border: 5px solid transparent; border-top-color: #5d7099; border-bottom: 0; }
.tri.up { border-top: 0; border-bottom: 5px solid #5d7099; }
.edge { width: 7px; flex: none; margin-right: 4px; background: rgba(190, 212, 250, .75); border-right: 1px solid #3f649a; }

.status { display: flex; align-items: center; box-sizing: border-box; height: 23px; border-top: 1px solid #4f76b0; border-bottom: 2px solid #10131c; background: linear-gradient(#f0f6fe, #d3e3f8 12%, #c5daf6 40%, #b0cdf3 45%, #d4e6fb); color: #15216a; }
.cell { display: flex; align-items: center; box-sizing: border-box; height: 18px; padding-left: 8px; border-right: 1px solid #9dbbe4; white-space: nowrap; }
.c1 { width: 83px; }
.c2 { width: 84px; }
.c3 { width: 136px; gap: 17px; }
.zoomer { display: flex; align-items: center; height: 100%; margin-left: auto; padding: 0 5px; border-left: 1px solid #6f95cc; background: linear-gradient(#c4daf7, #a5c4ee 40%, #82a8de 45%, #9dbfec); }
.views { display: flex; box-sizing: border-box; height: 18px; border: 1px solid #6f92c6; border-radius: 2px; background: linear-gradient(#d0e1f8, #b4cef1); }
.views button { width: 18px; border-left: 1px solid #9ab7e2; }
.views button.on { background: linear-gradient(#f8cf85, #fbe3a0 50%, #fdb93d); border: 0; }
.views svg { width: 12px; height: 12px; }
.pct { width: 40px; text-align: center; }
.rnd svg { width: 16px; height: 16px; }
.range { appearance: none; width: 100px; height: 16px; margin: 0 1px; background: linear-gradient(#56719f, #56719f) 60px 50% / 1px 7px no-repeat, linear-gradient(#e4eefc, #e4eefc) 0 9px / 100% 1px no-repeat, linear-gradient(#5d80b8, #5d80b8) 0 8px / 100% 1px no-repeat; }
.range::-webkit-slider-thumb { appearance: none; width: 9px; height: 13px; border: 1px solid #46618f; border-radius: 1px 1px 5px 5px; background: linear-gradient(90deg, #fff, #b9cdee); }
.fit { margin-left: 9px; }
</style>
